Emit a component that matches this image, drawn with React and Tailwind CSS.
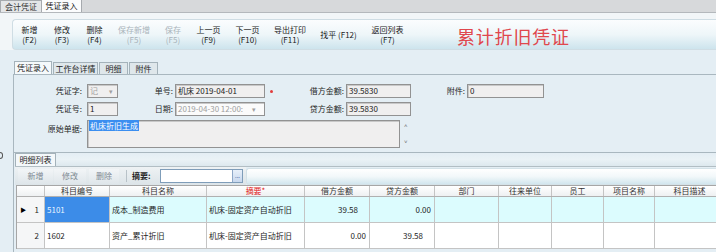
export default function App() {
  const tb = [
    { c: "w-[33px]", a: "新增", b: "(F2)" },
    { c: "w-[32px]", a: "修改", b: "(F3)" },
    { c: "w-[33px]", a: "删除", b: "(F4)" },
    { c: "w-[46px]", a: "保存新增", b: "(F5)", d: true },
    { c: "w-[32px]", a: "保存", b: "(F5)", d: true },
    { c: "w-[39px]", a: "上一页", b: "(F9)" },
    { c: "w-[39px]", a: "下一页", b: "(F10)" },
    { c: "w-[46px]", a: "导出打印", b: "(F11)" },
    { c: "w-[51px]", s: "找平 (F12)" },
    { c: "w-[47px]", a: "返回列表", b: "(F7)" },
  ];
  const box =
    "h-[14px] border border-[#929292] px-[2px] flex items-center shadow-[inset_1px_1px_0_#c8c8c8]";
  const inp = `${box} bg-[#f0efef] text-[#222]`;
  const cols = [
    { c: "w-[28px]", t: "" },
    { c: "w-[65px]", t: "科目编号" },
    { c: "w-[97px]", t: "科目名称" },
    { c: "w-[98px]", t: "摘要*", red: true },
    { c: "w-[65px]", t: "借方金额" },
    { c: "w-[65px]", t: "贷方金额" },
    { c: "w-[64px]", t: "部门" },
    { c: "w-[53px]", t: "往来单位" },
    { c: "w-[52px]", t: "员工" },
    { c: "w-[51px]", t: "项目名称" },
    { c: "w-[70px]", t: "科目描述" },
  ];
  const rows = [
    { n: "1", code: "5101", name: "成本_制造费用", sum: "机床-固定资产自动折旧", dr: "39.58", cr: "0.00", sel: true },
    { n: "2", code: "1602", name: "资产_累计折旧", sum: "机床-固定资产自动折旧", dr: "0.00", cr: "39.58" },
  ];
  return (
    <div className="w-[716px] h-[252px] overflow-hidden bg-[#e4eef4] flex flex-col text-[8px] leading-none text-[#1e1e1e] font-['Noto_Sans_CJK_SC',sans-serif]">
      {/* top tabs */}
      <div className="h-[13px] shrink-0 flex items-end bg-[#d7d9db] border-b border-[#b4b8bc]">
        <div className="w-[42px] h-[12px] flex items-center justify-center bg-[#e4e6e8] border border-b-0 border-[#a6aaae] text-[#333]">
          会计凭证
        </div>
        <div className="w-[40px] h-[13px] flex items-center justify-center bg-[#fbfcfd] border-t border-r border-[#a6aaae] text-[#111]">
          凭证录入
        </div>
      </div>
      {/* toolbar */}
      <div className="shrink-0 bg-[#f2f6f8] pt-[6px] pl-[12px]">
        <div className="h-[31px] flex items-center rounded-l-[4px] border border-r-0 border-[#cfdde4] bg-gradient-to-b from-[#fbfdfe] via-[#eef6f9] to-[#cde4ed]">
          {tb.map((b, i) => (
            <div
              key={i}
              className={`${b.c} flex flex-col items-center justify-center gap-[1px] leading-[9px] ${b.d ? "text-[#a9b3ba]" : "text-[#1a1a1a]"}`}
            >
              {b.s ? (
                <span>{b.s}</span>
              ) : (
                <>
                  <span>{b.a}</span>
                  <span>{b.b}</span>
                </>
              )}
            </div>
          ))}
          <div className="ml-[46px] pt-[2px] text-[18px] leading-none text-[#e0474d] tracking-[0.8px]">
            累计折旧凭证
          </div>
        </div>
      </div>
      {/* body */}
      <div className="flex-1 flex min-h-0">
        <div className="w-[13px] shrink-0 pt-[102px]">
          <div className="w-[3px] h-[7px] border border-l-0 border-[#555] rounded-r-[3px]"></div>
        </div>
        <div className="flex-1 flex flex-col pt-[11px] min-w-0">
          {/* form tabs */}
          <div className="h-[13px] flex items-end pl-[1px]">
            <div className="w-[38px] h-[13px] flex items-center justify-center bg-[#f5f9fb] border border-b-0 border-[#a4b2ba]">
              凭证录入
            </div>
            <div className="w-[45px] h-[12px] ml-[1px] flex items-center justify-center bg-[#dfe7eb] border border-b-0 border-[#a4b2ba]">
              工作台详情
            </div>
            <div className="w-[29px] h-[12px] ml-[1px] flex items-center justify-center bg-[#dfe7eb] border border-b-0 border-[#a4b2ba]">
              明细
            </div>
            <div className="w-[29px] h-[12px] ml-[1px] flex items-center justify-center bg-[#dfe7eb] border border-b-0 border-[#a4b2ba]">
              附件
            </div>
          </div>
          {/* form panel */}
          <div className="h-[79px] border border-r-0 border-[#a9b7bf] bg-[#e4eef4] pt-[9px] flex flex-col gap-[4px]">
            <div className="flex items-center h-[14px]">
              <div className="w-[70px] text-right pr-[2px]">凭证字:</div>
              <div className={`${box} bg-[#f0efef] text-[#a0a0a0] w-[31px] ml-[3px] justify-between`}>
                <span>记</span>
                <span className="text-[7px] pr-[2px]">▾</span>
              </div>
              <div className="w-[57px] text-right pr-[2px]">单号:</div>
              <div className={`${inp} w-[90px]`}>机床 2019-04-01</div>
              <div className="w-[81px] flex items-center">
                <span className="ml-[5px] w-[3px] h-[3px] rounded-full bg-[#e23b3b]"></span>
                <span className="flex-1 text-right pr-[2px]">借方金额:</span>
              </div>
              <div className={`${inp} w-[65px]`}>39.5830</div>
              <div className="w-[56px] text-right pr-[2px]">附件:</div>
              <div className={`${inp} w-[77px]`}>0</div>
            </div>
            <div className="flex items-center h-[14px]">
              <div className="w-[70px] text-right pr-[2px]">凭证号:</div>
              <div className={`${inp} w-[31px] ml-[3px]`}>1</div>
              <div className="w-[57px] text-right pr-[2px]">日期:</div>
              <div className={`${box} bg-[#fbfbfb] text-[#a0a0a0] w-[90px] justify-between`}>
                <span>2019-04-30 12:00:</span>
                <span className="text-[7px] pr-[6px]">▾</span>
              </div>
              <div className="w-[81px] text-right pr-[2px]">贷方金额:</div>
              <div className={`${inp} w-[65px]`}>39.5830</div>
            </div>
            <div className="flex items-start h-[28px]">
              <div className="w-[70px] text-right pr-[2px] pt-[5px]">原始单据:</div>
              <div className="ml-[3px] w-[313px] h-[28px] border border-[#929292] bg-[#f0efef] p-[1px] shadow-[inset_1px_1px_0_#c8c8c8]">
                <span className="bg-[#3b8ef0] text-white px-[1px]">机床折旧生成</span>
              </div>
              <div className="ml-[4px] h-[28px] flex flex-col justify-between py-[3px] text-[6px] text-[#666]">
                <span>˄</span>
                <span>˅</span>
              </div>
            </div>
          </div>
          {/* detail */}
          <div className="flex-1 flex flex-col pl-[1px] border-l border-[#a9b7bf]">
            <div className="h-[14px] flex items-end border-b border-[#b2bec4] bg-gradient-to-b from-[#e4eef4] via-[#eaf2f6] to-[#dde8ee]">
              <div className="w-[41px] h-[13px] flex items-center justify-center bg-[#f4f8fa] border border-b-0 border-[#a4b2ba]">
                明细列表
              </div>
            </div>
            <div className="h-[18px] flex items-center">
              <div className="w-[231px] h-[18px] flex items-center pl-[3px] bg-gradient-to-b from-[#eef2f4] to-[#dce4e8] text-[#7e8a92]">
                <div className="w-[35px] h-[15px] flex items-center justify-center bg-gradient-to-b from-[#f2f5f7] to-[#dfe6ea]">新增</div>
                <div className="w-[32px] h-[15px] ml-[1px] flex items-center justify-center bg-gradient-to-b from-[#f2f5f7] to-[#dfe6ea]">修改</div>
                <div className="w-[30px] h-[15px] ml-[3px] flex items-center justify-center bg-gradient-to-b from-[#f2f5f7] to-[#dfe6ea]">删除</div>
                <div className="w-[1px] h-[12px] ml-[7px] bg-[#b8c2c8]"></div>
                <div className="ml-[5px] w-[28px] text-[#1e1e1e] font-semibold">摘要:</div>
                <div className="w-[83px] h-[14px] bg-white border border-[#7f9db9] flex justify-end">
                  <div className="w-[10px] h-[12px] bg-gradient-to-b from-[#e8f0fa] to-[#c8d8ee] border-l border-[#8fa8c8] text-[6px] text-[#24408a] flex items-center justify-center">
                    ...
                  </div>
                </div>
              </div>
              <div className="flex-1 h-[17px] rounded-l-[3px] border border-r-0 border-[#d4e2e8] bg-gradient-to-b from-[#ffffff] via-[#f2f8fa] to-[#d2e6ee]"></div>
            </div>
            {/* grid */}
            <div className="ml-[1px] bg-white border-t border-l border-[#a6a6a6] flex flex-col">
              <div className="h-[11px] flex border-b border-[#b0b0b0] bg-gradient-to-b from-[#ffffff] to-[#eef0f2]">
                {cols.map((c, i) => (
                  <div
                    key={i}
                    className={`${c.c} shrink-0 border-r border-[#c4c4c4] flex items-center justify-center ${c.red ? "text-[#e01818]" : "text-[#333]"}`}
                  >
                    {c.t}
                  </div>
                ))}
              </div>
              {rows.map((r, i) => (
                <div key={i} className={`h-[26px] flex border-b border-[#c4c4c4] ${r.sel ? "bg-[#dcfcfe]" : "bg-white"}`}>
                  <div className="w-[28px] shrink-0 border-r border-[#c4c4c4] bg-[#f5f6f7] flex items-center">
                    <span className="w-[13px] text-center text-[6px] text-black">{r.sel ? "▶" : ""}</span>
                    <span className="w-[15px] text-center">{r.n}</span>
                  </div>
                  <div className={`w-[65px] shrink-0 border-r border-[#c4c4c4] flex items-center pl-[2px] ${r.sel ? "bg-[#3c8ce8] text-[#e8f4ff]" : ""}`}>
                    {r.code}
                  </div>
                  <div className="w-[97px] shrink-0 border-r border-[#c4c4c4] flex items-center pl-[2px]">{r.name}</div>
                  <div className="w-[98px] shrink-0 border-r border-[#c4c4c4] flex items-center pl-[2px]">{r.sum}</div>
                  <div className={`w-[65px] shrink-0 border-r border-[#c4c4c4] flex items-center justify-end ${r.dr === "0.00" ? "pr-[3px]" : "pr-[11px]"}`}>{r.dr}</div>
                  <div className={`w-[65px] shrink-0 border-r border-[#c4c4c4] flex items-center justify-end ${r.cr === "0.00" ? "pr-[3px]" : "pr-[11px]"}`}>{r.cr}</div>
                  <div className="w-[64px] shrink-0 border-r border-[#c4c4c4]"></div>
                  <div className="w-[53px] shrink-0 border-r border-[#c4c4c4]"></div>
                  <div className="w-[52px] shrink-0 border-r border-[#c4c4c4]"></div>
                  <div className="w-[51px] shrink-0 border-r border-[#c4c4c4]"></div>
                  <div className="w-[70px] shrink-0 border-r border-[#c4c4c4]"></div>
                </div>
              ))}
            </div>
          </div>
        </div>
      </div>
    </div>
  );
}
